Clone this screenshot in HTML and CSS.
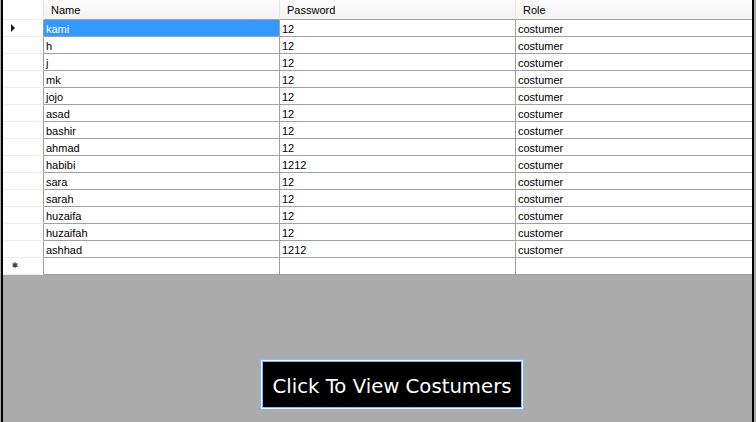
FILE: index.html
```html
<!DOCTYPE html>
<html>
<head>
<meta charset="utf-8">
<link rel="stylesheet" href="styles.css">
</head>
<body>
<div class="frame">
  <div class="grid">
    <div class="hcell rh"></div>
    <div class="hcell">Name</div>
    <div class="hcell">Password</div>
    <div class="hcell last">Role</div>

    <div class="rh"><span class="arrow"></span></div>
    <div class="cell sel">kami</div><div class="cell">12</div><div class="cell last">costumer</div>
    <div class="rh"></div><div class="cell">h</div><div class="cell">12</div><div class="cell last">costumer</div>
    <div class="rh"></div><div class="cell">j</div><div class="cell">12</div><div class="cell last">costumer</div>
    <div class="rh"></div><div class="cell">mk</div><div class="cell">12</div><div class="cell last">costumer</div>
    <div class="rh"></div><div class="cell">jojo</div><div class="cell">12</div><div class="cell last">costumer</div>
    <div class="rh"></div><div class="cell">asad</div><div class="cell">12</div><div class="cell last">costumer</div>
    <div class="rh"></div><div class="cell">bashir</div><div class="cell">12</div><div class="cell last">costumer</div>
    <div class="rh"></div><div class="cell">ahmad</div><div class="cell">12</div><div class="cell last">costumer</div>
    <div class="rh"></div><div class="cell">habibi</div><div class="cell">1212</div><div class="cell last">costumer</div>
    <div class="rh"></div><div class="cell">sara</div><div class="cell">12</div><div class="cell last">costumer</div>
    <div class="rh"></div><div class="cell">sarah</div><div class="cell">12</div><div class="cell last">costumer</div>
    <div class="rh"></div><div class="cell">huzaifa</div><div class="cell">12</div><div class="cell last">costumer</div>
    <div class="rh"></div><div class="cell">huzaifah</div><div class="cell">12</div><div class="cell last">customer</div>
    <div class="rh"></div><div class="cell">ashhad</div><div class="cell">1212</div><div class="cell last">customer</div>
    <div class="rh"><svg class="star" width="6" height="6" viewBox="0 0 6 6"><path d="M3 0.3V5.7M0.6 1.6L5.4 4.4M0.6 4.4L5.4 1.6" stroke="#444" stroke-width="1.3"/></svg></div>
    <div class="cell"></div><div class="cell"></div><div class="cell last"></div>
  </div>
  <div class="area">
    <button class="btn">Click To View Costumers</button>
  </div>
</div>
</body>
</html>
```

FILE: styles.css
```css
html, body {
  margin: 0;
  padding: 0;
}
body {
  background: #ababab;
  width: 756px;
  height: 422px;
  overflow: hidden;
}
.frame {
  margin-left: 1px;
  width: 749px;
  height: 422px;
  border-left: 2px solid #000;
  border-right: 2px solid #000;
  background: #ababab;
  display: flex;
  flex-direction: column;
}
.grid {
  display: grid;
  grid-template-columns: 41px 236px 236px 236px;
  grid-template-rows: 20px repeat(15, 17px);
  background: #fff;
  font-family: "Liberation Sans", Arial, sans-serif;
  font-size: 11px;
  color: #000;
}
.hcell {
  background: linear-gradient(#fbfbfb, #f3f3f3);
  border-right: 1px solid #e6e6e6;
  border-bottom: 1px solid #a0a0a0;
  padding-left: 7px;
  display: flex;
  align-items: center;
  padding-top: 1px;
  box-sizing: border-box;
}
.hcell.rh {
  padding: 0;
  border-right: 1px solid #e6e6e6;
}
.rh {
  background: #fff;
  border-right: 1px solid #a0a0a0;
  border-bottom: 1px solid #ececec;
  box-sizing: border-box;
  display: flex;
  align-items: center;
}
.cell {
  border-right: 1px solid #a0a0a0;
  border-bottom: 1px solid #a0a0a0;
  box-sizing: border-box;
  padding-left: 2px;
  display: flex;
  align-items: center;
  padding-top: 1px;
  white-space: nowrap;
}
.cell.last, .hcell.last {
  border-right: none;
}
.cell.sel {
  background: #3399ff;
  color: #fff;
  border-bottom-color: #a0a0a0;
}
.arrow {
  width: 0;
  height: 0;
  margin-left: 8px;
  border-top: 4px solid transparent;
  border-bottom: 4px solid transparent;
  border-left: 4px solid #1a1a1a;
}
.star {
  margin-left: 9px;
  margin-top: -2px;
}
.area {
  flex: 1;
  padding-top: 84px;
  padding-left: 257px;
}
.btn {
  width: 264px;
  height: 51px;
  background: #000;
  color: #fff;
  border: 1px solid #8cb8e6;
  box-shadow: inset 0 0 0 1px #eef5fd, inset 0 0 0 2px #8cb8e6;
  font-family: "DejaVu Sans", Verdana, sans-serif;
  font-size: 19.7px;
  padding: 3px 0 0 0;
  margin: 0;
  cursor: default;
}
```
